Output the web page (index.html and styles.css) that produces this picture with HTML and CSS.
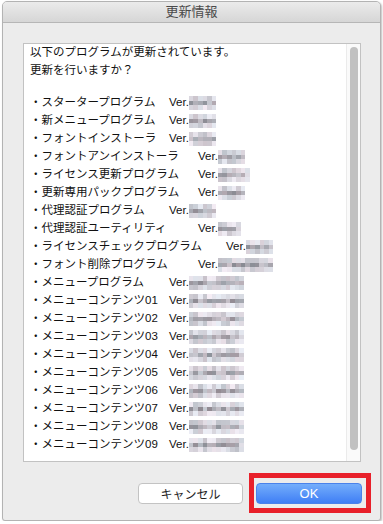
FILE: index.html
```html
<!DOCTYPE html>
<html lang="ja">
<head>
    <meta charset="UTF-8">
    <meta name="viewport" content="width=device-width, initial-scale=1.0">
    <title>更新情報</title>
    <link rel="stylesheet" href="styles.css">
</head>
<body>

<div class="window">
    <div class="titlebar">更新情報</div>

    <div class="window-body">
        <div class="text-box">
            <div class="text-content">
                <div class="intro">
                    <div>以下のプログラムが更新されています。</div>
                    <div>更新を行いますか？</div>
                </div>
                <div class="update-list" id="updateList"></div>
            </div>
            <div class="scrollbar">
                <div class="scroll-thumb"></div>
            </div>
        </div>

        <div class="button-row">
            <button class="btn btn-cancel">キャンセル</button>
            <div class="ok-wrap">
                <button class="btn btn-ok">OK</button>
                <span class="highlight"></span>
            </div>
        </div>
    </div>
</div>

<script>
    // col = which tab stop the "Ver." lands on, cells = width of the blurred version
    const updates = [
        { name: "スタータープログラム", col: 1, cells: 6 },
        { name: "新メニュープログラム", col: 1, cells: 6 },
        { name: "フォントインストーラ", col: 1, cells: 6 },
        { name: "フォントアンインストーラ", col: 2, cells: 6 },
        { name: "ライセンス更新プログラム", col: 2, cells: 7 },
        { name: "更新専用パックプログラム", col: 2, cells: 6 },
        { name: "代理認証プログラム", col: 1, cells: 6 },
        { name: "代理認証ユーティリティ", col: 2, cells: 5 },
        { name: "ライセンスチェックプログラム", col: 3, cells: 6 },
        { name: "フォント削除プログラム", col: 2, cells: 12 },
        { name: "メニュープログラム", col: 1, cells: 12 },
        { name: "メニューコンテンツ01", col: 1, cells: 12 },
        { name: "メニューコンテンツ02", col: 1, cells: 12 },
        { name: "メニューコンテンツ03", col: 1, cells: 12 },
        { name: "メニューコンテンツ04", col: 1, cells: 12 },
        { name: "メニューコンテンツ05", col: 1, cells: 12 },
        { name: "メニューコンテンツ06", col: 1, cells: 12 },
        { name: "メニューコンテンツ07", col: 1, cells: 12 },
        { name: "メニューコンテンツ08", col: 1, cells: 12 },
        { name: "メニューコンテンツ09", col: 1, cells: 12 }
    ];

    let seed = 7;
    function rand() {
        seed = (seed * 9301 + 49297) % 233280;
        return seed / 233280;
    }

    function grey(min, max) {
        const v = Math.round(min + rand() * (max - min));
        const tint = Math.round((rand() - 0.5) * 14);
        return `rgb(${v + tint}, ${v - 2}, ${v + 6})`;
    }

    function buildMosaic(cells) {
        const mosaic = document.createElement("span");
        mosaic.className = "mosaic";
        for (let c = 0; c < cells; c++) {
            const fade = c === cells - 1 ? 20 : 0;
            for (let r = 0; r < 3; r++) {
                const cell = document.createElement("span");
                cell.style.background = r === 1 ? grey(140 + fade, 205 + fade) : grey(195 + fade, 240);
                mosaic.appendChild(cell);
            }
        }
        return mosaic;
    }

    const list = document.getElementById("updateList");
    updates.forEach(item => {
        const row = document.createElement("div");
        row.className = "update-row";

        const name = document.createElement("span");
        name.className = "name col" + item.col;
        name.innerText = "・" + item.name;

        const ver = document.createElement("span");
        ver.className = "ver";
        ver.innerText = "Ver.";

        row.appendChild(name);
        row.appendChild(ver);
        row.appendChild(buildMosaic(item.cells));
        list.appendChild(row);
    });
</script>

</body>
</html>
```

FILE: styles.css
```css
body {
    margin: 0;
    padding: 0;
    background: #fff;
    font-family: "Liberation Sans", "Noto Sans CJK JP", sans-serif;
}

.window {
    margin: 1px 0 0 2px;
    width: 379px;
    height: 520px;
    box-sizing: border-box;
    border: 1px solid #b3b3b3;
    border-radius: 5px 5px 3px 3px;
    background: #ececec;
    box-shadow: 1px 1px 2px rgba(0, 0, 0, 0.25);
    overflow: hidden;
}

.titlebar {
    height: 20px;
    line-height: 20px;
    border-bottom: 1px solid #b6b6b6;
    background: linear-gradient(#ebebeb, #d6d6d6);
    text-align: center;
    font-size: 13px;
    color: #4b4b4b;
}

.window-body {
    padding: 20px 19px 0 20px;
}

.text-box {
    display: flex;
    width: 338px;
    height: 419px;
    box-sizing: border-box;
    border: 1px solid #c2c2c2;
    background: #fff;
}

.text-content {
    flex: 1;
    overflow: hidden;
    padding-left: 6px;
    font-size: 11.5px;
    line-height: 18px;
    color: #111;
    white-space: nowrap;
}

.intro {
    margin-top: -1px;
}

.update-list {
    margin-top: 14px;
}

.update-row {
    display: flex;
    align-items: baseline;
    height: 18px;
}

.name {
    flex: none;
}

.col1 { width: 139px; }
.col2 { width: 168px; }
.col3 { width: 196px; }

.mosaic {
    display: grid;
    grid-template-rows: repeat(3, 4.7px);
    grid-auto-flow: column;
    grid-auto-columns: 4.6px;
    align-self: center;
    margin-top: 2px;
}

.scrollbar {
    width: 14px;
    border-left: 1px solid #ebebeb;
    background: #fafafa;
    padding: 3px 0 11px 3px;
    box-sizing: border-box;
}

.scroll-thumb {
    width: 8px;
    height: 100%;
    border-radius: 4px;
    background: #c1c1c1;
}

.button-row {
    display: flex;
    justify-content: flex-end;
    gap: 13px;
    margin-top: 21px;
    margin-right: -1px;
}

.btn {
    width: 106px;
    height: 21px;
    border-radius: 4px;
    font-family: "Liberation Sans", "Noto Sans CJK JP", sans-serif;
    padding: 0;
    cursor: pointer;
}

.btn-cancel {
    width: 105px;
    background: #fff;
    border: 1px solid #c3c3c3;
    color: #1e1e1e;
    font-size: 12px;
}

.btn-ok {
    background: linear-gradient(#74aefb, #3f7ef5);
    border: 1px solid #4a82ea;
    color: #fff;
    font-size: 13px;
}

.ok-wrap {
    position: relative;
    height: 21px;
}

.highlight {
    position: absolute;
    left: -7px;
    top: -10px;
    width: 122px;
    height: 40px;
    box-sizing: border-box;
    border: 5px solid #e8202a;
}
```
